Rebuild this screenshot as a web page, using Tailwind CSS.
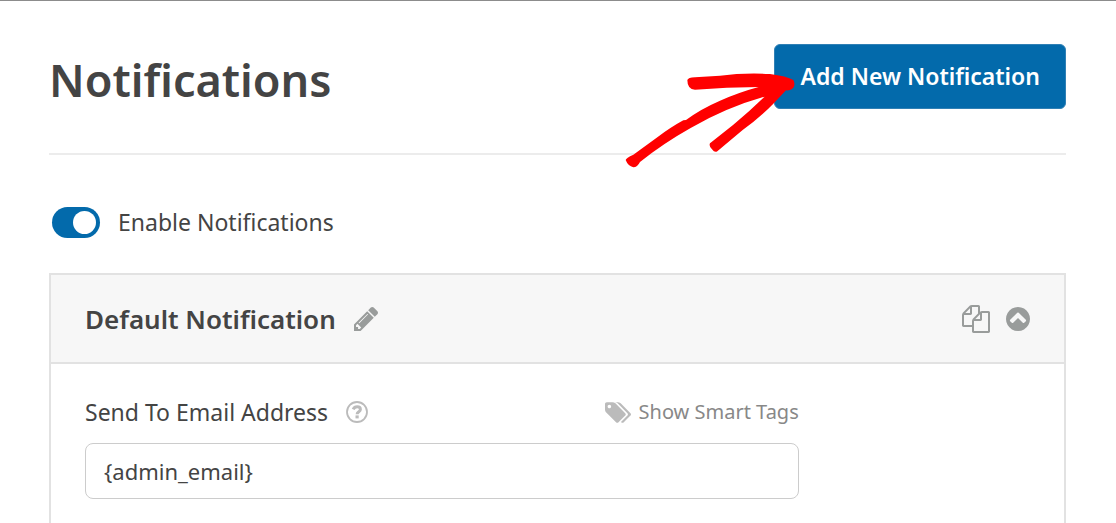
<!DOCTYPE html>
<html lang="en">
<head>
<meta charset="utf-8">
<meta name="viewport" content="width=device-width, initial-scale=1">
<title>Notifications</title>
<script src="https://cdn.jsdelivr.net/npm/@tailwindcss/browser@4"></script>
</head>
<body class="min-h-screen overflow-hidden border-t border-[#8c8c8c] bg-white pr-[50px] pl-[49px] font-['Segoe_UI','Noto_Sans',sans-serif] text-[#444]">
<main>
  <header class="flex items-start justify-between border-b-2 border-[#ececec] pt-[43px] pb-[41px]">
    <h1 class="pt-1 text-[45px] leading-[64px] font-semibold">Notifications</h1>
    <div class="relative">
      <button type="button" class="h-[65px] cursor-pointer rounded-md border border-[#3080b5] bg-[#036aab] px-[25px] text-[23px] font-semibold whitespace-nowrap text-white">Add New Notification</button>
      <svg class="pointer-events-none absolute -top-3.5 -left-[174px] h-[150px] w-[300px]" viewBox="0 0 900 450" fill="#f00" aria-hidden="true">
        <path d="M262 150Q264 143 285 142L360 137Q430 128 510 132Q560 138 580 150Q588 166 577 176Q570 182 558 181L520 221Q480 262 428 300L352 364Q344 369 336 358Q326 348 330 340L400 284Q450 243 494 200Q380 232 272 294Q190 340 120 396Q112 412 100 412Q84 408 77 390Q78 384 100 374L170 323Q215 290 250 271L258 270Q300 238 360 212Q420 186 476 171Q380 172 285 179Q262 178 262 150Z"/>
      </svg>
    </div>
  </header>

  <label class="mt-[51px] flex w-fit cursor-pointer items-center gap-[18px] pl-[3px]">
    <input type="checkbox" role="switch" checked class="peer sr-only">
    <span class="flex h-[31px] w-12 items-center justify-end rounded-full bg-[#036aab] pr-1"><span class="size-[23px] rounded-full bg-white"></span></span>
    <span class="text-[23px] leading-8">Enable Notifications</span>
  </label>

  <section class="mt-[35px] border-2 border-b-0 border-[#e2e2e2]">
    <div class="flex h-[89px] items-center justify-between border-b-2 border-[#e2e2e2] bg-[#f7f7f7] px-[34px]">
      <div class="flex items-center gap-[18px]">
        <h2 class="text-[26px] leading-9 font-semibold">Default Notification</h2>
        <button type="button" aria-label="Rename notification" class="cursor-pointer">
          <svg class="size-6" viewBox="128 149 1515 1515" fill="#999c9b"><path d="M491 1536l91-91-235-235-91 91v107h128v128h107zm523-928q0-22-22-22-10 0-17 7l-542 542q-7 7-7 17 0 22 22 22 10 0 17-7l542-542q7-7 7-17zm-54-192l416 416-832 832h-416v-416zm683 96q0 53-37 90l-166 166-416-416 166-165q36-38 90-38 53 0 91 38l235 234q37 39 37 91z"/></svg>
        </button>
      </div>
      <div class="flex items-center gap-4">
        <button type="button" aria-label="Duplicate notification" class="cursor-pointer">
          <svg class="size-7" viewBox="0 0 1792 1792" fill="#999c9b"><path d="M1696 384q40 0 68 28t28 68v1216q0 40-28 68t-68 28h-960q-40 0-68-28t-28-68v-288h-544q-40 0-68-28t-28-68v-672q0-40 20-88t48-76l408-408q28-28 76-48t88-20h416q40 0 68 28t28 68v328q68-40 128-40h416zm-544 213l-299 299h299v-299zm-640-384l-299 299h299v-299zm196 647l316-316v-416h-384v416q0 40-28 68t-68 28h-416v640h512v-256q0-40 20-88t48-76zm956 804v-1152h-384v416q0 40-28 68t-68 28h-416v640h896z"/></svg>
        </button>
        <button type="button" aria-label="Collapse notification" class="cursor-pointer">
          <svg class="size-6" viewBox="128 128 1536 1536" fill="#999c9b"><path d="M1293 1139l102-102q19-19 19-45t-19-45l-454-454q-19-19-45-19t-45 19l-454 454q-19 19-19 45t19 45l102 102q19 19 45 19t45-19l307-307 307 307q19 19 45 19t45-19zm371-243q0 209-103 385.5t-279.5 279.5-385.5 103-385.5-103-279.5-279.5-103-385.5 103-385.5 279.5-279.5 385.5-103 385.5 103 279.5 279.5 103 385.5z"/></svg>
        </button>
      </div>
    </div>

    <div class="w-[75%] max-w-full pt-8 pr-3 pb-9 pl-[34px]">
      <div class="flex items-center justify-between">
        <div class="flex items-center gap-[18px]">
          <label for="email" class="text-[23px] leading-8">Send To Email Address</label>
          <button type="button" aria-label="Help" class="cursor-help">
            <svg class="size-[22px]" viewBox="0 0 22 22" fill="none" stroke="#bbb"><circle cx="11" cy="11" r="10" stroke-width="1.8"/><path d="M7.2 8.4C8 6.6 9.4 5.8 11.2 5.8C13 5.8 14.4 6.8 14.4 8.4C14.4 10.8 11.1 10.6 11.1 13.2" stroke-width="3"/><path d="M11.1 14.4V17.4" stroke-width="3.2"/></svg>
          </button>
        </div>
        <a href="#" class="flex items-center gap-2 text-xl leading-7 text-[#888]">
          <svg class="h-[21px] w-[26px]" viewBox="128 128 1900 1516" fill="#bbb" aria-hidden="true"><path d="M576 448q0-53-37.5-90.5t-90.5-37.5-90.5 37.5-37.5 90.5 37.5 90.5 90.5 37.5 90.5-37.5 37.5-90.5zm1067 576q0 53-37 90l-491 492q-39 37-91 37-53 0-90-37l-715-716q-38-37-64.5-101t-26.5-117v-416q0-52 38-90t90-38h416q53 0 117 26.5t102 64.5l715 714q37 39 37 91zm384 0q0 53-37 90l-491 492q-39 37-91 37-36 0-59-14t-53-45l470-470q37-37 37-90 0-52-37-91l-715-714q-38-38-102-64.5t-117-26.5h224q53 0 117 26.5t102 64.5l715 714q37 39 37 91z"/></svg>
          Show Smart Tags
        </a>
      </div>
      <input id="email" type="text" value="{admin_email}" class="mt-[15px] h-14 w-full rounded-lg border border-[#ccc] bg-white px-[18px] text-[22px] outline-none">
    </div>
  </section>
</main>
</body>
</html>
